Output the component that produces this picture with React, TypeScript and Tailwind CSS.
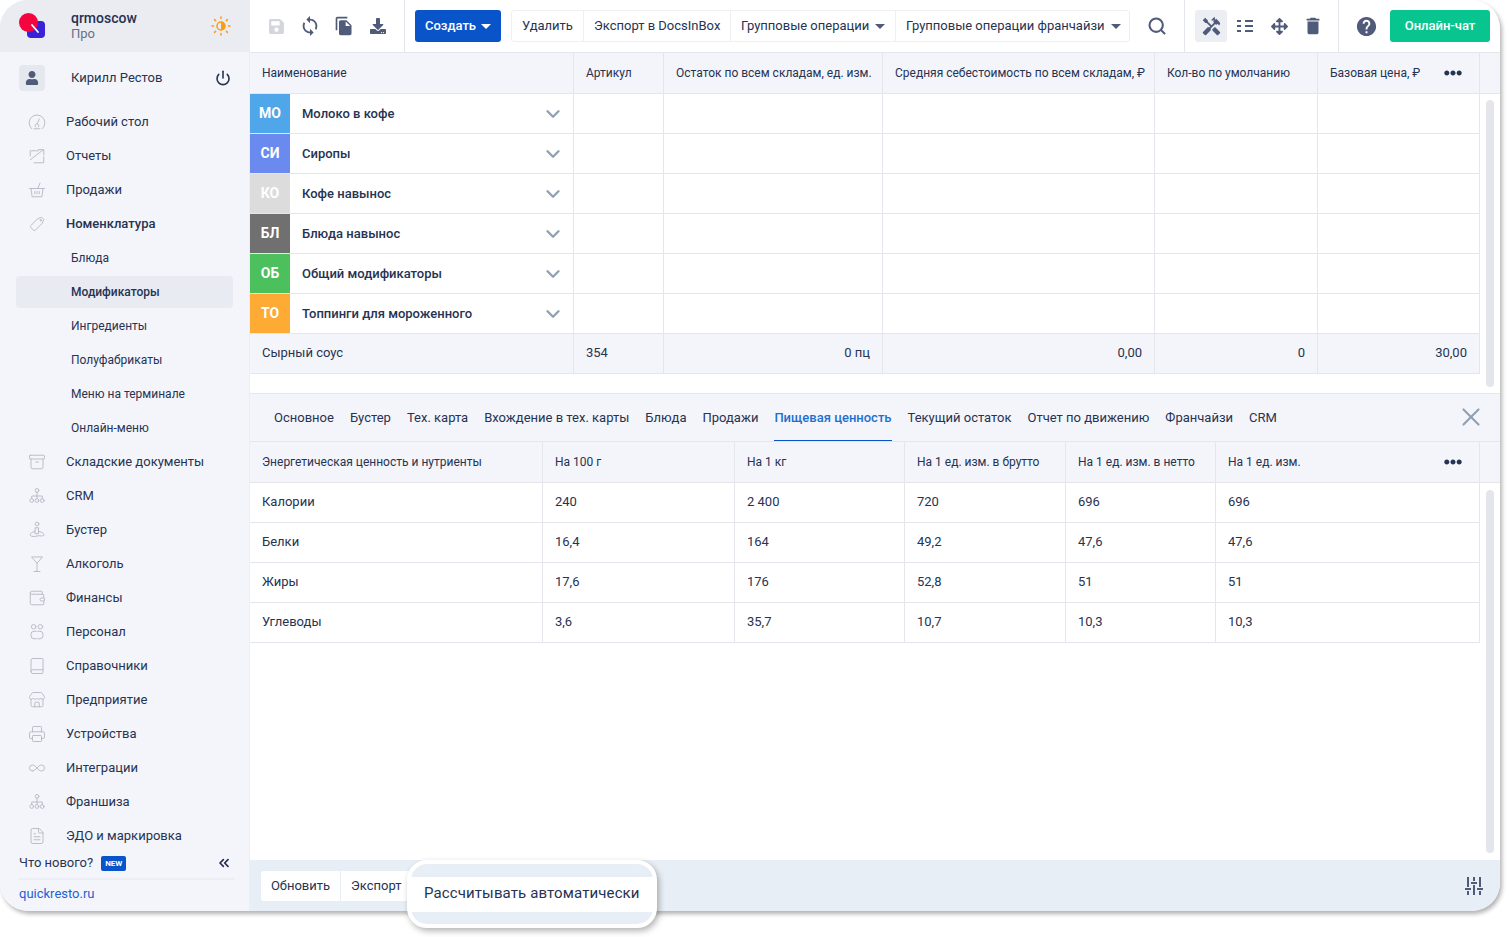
import type { ComponentType, ReactNode } from "react";
import {
  Archive,
  Book,
  ChevronDown,
  ChevronsLeft,
  FileText,
  Infinity as InfinityIcon,
  Martini,
  Power,
  Printer,
  Search,
  Store,
  Wallet,
  X,
} from "lucide-react";
import { FaArrowsAlt, FaDownload, FaEllipsisH, FaSave, FaUser } from "react-icons/fa";
import { MdDelete, MdFileCopy, MdHandyman, MdHelp, MdSync } from "react-icons/md";

type IconProps = { className?: string; strokeWidth?: number };
type NavIcon = ComponentType<IconProps>;

function line(children: ReactNode) {
  return function LineIcon({ className, strokeWidth }: IconProps) {
    return (
      <svg className={className} viewBox="0 0 24 24" fill="none" stroke="currentColor" strokeWidth={strokeWidth} strokeLinecap="round" strokeLinejoin="round">
        {children}
      </svg>
    );
  };
}

const DashIcon = line(
  <>
    <path d="M5 21a10.5 10.5 0 1 1 14 0" />
    <path d="M10 18.5a2.5 2.5 0 1 1 4 0" />
    <path d="M12.5 14l2.5-6" />
    <path d="M8 21h8" />
  </>,
);
const ReportIcon = line(
  <>
    <path d="M14 5H3v7" />
    <path d="M3 17L20 4" />
    <path d="M14 3.5h7v7" />
    <path d="M21 13v8H8" />
  </>,
);
const BasketIcon = line(
  <>
    <path d="M2 10h20M4 10l1.5 11h13L20 10" />
    <path d="M13 10l3-7" />
    <path d="M9 14v3M12 14v3M15 14v3" />
  </>,
);
const TagIcon = line(
  <>
    <path d="M13 5l5-2 3 3-2 5-9 9a2 2 0 0 1-3 0l-3-3a2 2 0 0 1 0-3z" />
    <circle cx="17" cy="7" r="1" />
  </>,
);
const TreeIcon = line(
  <>
    <circle cx="12" cy="4.5" r="2.5" />
    <path d="M12 7v8M5 15.5V12h14v3.5" />
    <circle cx="5" cy="18" r="2.5" />
    <circle cx="12" cy="18" r="2.5" />
    <circle cx="19" cy="18" r="2.5" />
  </>,
);
const BoosterIcon = line(
  <>
    <circle cx="12" cy="4" r="2.5" />
    <path d="M10 9h4v8h-4z" />
    <path d="M9 14c-4 1-7 3-6 5s6 2 9 1 8 1 9-1-2-4-6-5" />
  </>,
);
const StaffIcon = line(
  <>
    <circle cx="7.5" cy="5" r="3" />
    <circle cx="16.5" cy="5" r="3" />
    <path d="M11 11H8a4 4 0 0 0-4 4v2a4 4 0 0 0 4 4h3" />
    <path d="M13 11h3a4 4 0 0 1 4 4v2a4 4 0 0 1-4 4h-3" />
  </>,
);

const navTop: { label: string; icon: NavIcon }[] = [
  { label: "Рабочий стол", icon: DashIcon },
  { label: "Отчеты", icon: ReportIcon },
  { label: "Продажи", icon: BasketIcon },
];

const subItems = ["Блюда", "Модификаторы", "Ингредиенты", "Полуфабрикаты", "Меню на терминале", "Онлайн-меню"];

const navBottom: { label: string; icon: NavIcon }[] = [
  { label: "Складские документы", icon: Archive },
  { label: "CRM", icon: TreeIcon },
  { label: "Бустер", icon: BoosterIcon },
  { label: "Алкоголь", icon: Martini },
  { label: "Финансы", icon: Wallet },
  { label: "Персонал", icon: StaffIcon },
  { label: "Справочники", icon: Book },
  { label: "Предприятие", icon: Store },
  { label: "Устройства", icon: Printer },
  { label: "Интеграции", icon: InfinityIcon },
  { label: "Франшиза", icon: TreeIcon },
  { label: "ЭДО и маркировка", icon: FileText },
];

const groups = [
  { tile: "МО", name: "Молоко в кофе", color: "bg-[#4fa6e8]" },
  { tile: "СИ", name: "Сиропы", color: "bg-[#6a8af0]" },
  { tile: "КО", name: "Кофе навынос", color: "bg-[#dcdcdc]" },
  { tile: "БЛ", name: "Блюда навынос", color: "bg-[#707070]" },
  { tile: "ОБ", name: "Общий модификаторы", color: "bg-[#4cc05c]" },
  { tile: "ТО", name: "Топпинги для мороженного", color: "bg-[#fdab34]" },
];

const tabs = [
  "Основное",
  "Бустер",
  "Тех. карта",
  "Вхождение в тех. карты",
  "Блюда",
  "Продажи",
  "Пищевая ценность",
  "Текущий остаток",
  "Отчет по движению",
  "Франчайзи",
  "CRM",
];

const nutrition = [
  ["Калории", "240", "2 400", "720", "696", "696"],
  ["Белки", "16,4", "164", "49,2", "47,6", "47,6"],
  ["Жиры", "17,6", "176", "52,8", "51", "51"],
  ["Углеводы", "3,6", "35,7", "10,7", "10,3", "10,3"],
];

const topCols = "grid grid-cols-[324px_90px_219px_272px_163px_162px]";
const bottomCols = "grid grid-cols-[293px_192px_170px_161px_150px_264px]";

function NavRow({ label, icon: Icon, bold }: { label: string; icon: NavIcon; bold?: boolean }) {
  return (
    <div className="flex h-[34px] shrink-0 items-center">
      <div className="flex w-[66px] justify-center pl-[8px]">
        <Icon className="h-[18px] w-[18px] text-[#b4b8c2]" strokeWidth={1.2} />
      </div>
      <span className={bold ? "font-medium" : ""}>{label}</span>
    </div>
  );
}

function Sidebar() {
  return (
    <aside className="flex w-[250px] shrink-0 flex-col border-r border-[#eceef3] bg-[#f4f5fa] text-[13px] text-[#263352]">
      <div className="flex h-[52px] shrink-0 items-center bg-[#ebecf1] pl-[19px] pr-[18px]">
        <svg className="h-[28px] w-[28px]" viewBox="0 0 28 28">
          <rect x="8" y="9" width="18" height="17" rx="4" fill="#3a22d6" />
          <circle cx="9.5" cy="10.5" r="9.5" fill="#f5053f" />
          <path d="M13 13l6 7" stroke="#fff" strokeWidth="1.8" strokeLinecap="round" />
        </svg>
        <div className="ml-[24px] flex flex-1 flex-col leading-[15px]">
          <span className="text-[14px] font-medium">qrmoscow</span>
          <span className="text-[#667089]">Про</span>
        </div>
        <svg className="h-[20px] w-[20px]" viewBox="0 0 20 20" stroke="#fb9a14" strokeWidth="1.5" strokeLinecap="round">
          <circle cx="10" cy="10" r="4" fill="none" />
          <path d="M10 6a4 4 0 0 1 0 8z" fill="#fb9a14" stroke="none" />
          <path d="M10 1v1.5M10 17.5V19M1 10h1.5M17.5 10H19M3.6 3.6l1.1 1.1M15.3 15.3l1.1 1.1M3.6 16.4l1.1-1.1M15.3 4.7l1.1-1.1" />
        </svg>
      </div>
      <div className="flex h-[53px] shrink-0 items-center pb-[1px] pl-[19px] pr-[18px]">
        <div className="flex h-[26px] w-[26px] items-center justify-center rounded-[4px] bg-[#e6e8ef]">
          <FaUser className="h-[14px] w-[14px] text-[#4f5b78]" />
        </div>
        <span className="ml-[26px] flex-1">Кирилл Рестов</span>
        <Power className="h-[16px] w-[16px] text-[#263352]" strokeWidth={2.4} />
      </div>
      <div className="flex min-h-0 flex-1 flex-col overflow-hidden">
        {navTop.map((n) => (
          <NavRow key={n.label} {...n} />
        ))}
        <NavRow label="Номенклатура" icon={TagIcon} bold />
        {subItems.map((s) => (
          <div key={s} className="flex h-[34px] shrink-0 items-center px-[16px] text-[12px]">
            <div
              className={
                s === "Модификаторы"
                  ? "flex h-[32px] w-[217px] items-center rounded-[4px] bg-[#e9ebf2] pl-[55px] font-medium"
                  : "flex h-[32px] w-[217px] items-center pl-[55px]"
              }
            >
              {s}
            </div>
          </div>
        ))}
        {navBottom.map((n) => (
          <NavRow key={n.label} {...n} />
        ))}
      </div>
      <div className="h-[60px] shrink-0 pl-[19px] pr-[14px] pt-[3px]">
        <div className="flex h-[26px] items-center border-b-2 border-[#eceef3] pb-[6px]">
          <span>Что нового?</span>
          <span className="ml-[8px] rounded-[2px] bg-[#0a54c9] px-[4px] py-[1px] text-[8px] font-bold leading-[13px] text-white">NEW</span>
          <ChevronsLeft className="ml-auto mr-[3px] h-[16px] w-[16px]" strokeWidth={2.6} />
        </div>
        <div className="mt-[4px] text-[#1f5fd0]">quickresto.ru</div>
      </div>
    </aside>
  );
}

function ToolIcon({ children, active }: { children: ReactNode; active?: boolean }) {
  return (
    <div className={active ? "flex h-[32px] w-[32px] items-center justify-center rounded-[3px] bg-[#eceef3]" : "flex h-[32px] w-[32px] items-center justify-center"}>
      {children}
    </div>
  );
}

function Caret() {
  return <span className="ml-[6px] inline-block h-0 w-0 border-x-[5px] border-t-[5px] border-x-transparent border-t-[#4f5b78]" />;
}

function Toolbar() {
  const btn = "flex h-full shrink-0 items-center whitespace-nowrap border-r border-[#eeeff3] px-[10px] last:border-r-0";
  return (
    <div className="flex h-[53px] shrink-0 items-center border-b border-[#e4e6ec] text-[13px] text-[#263352]">
      <div className="flex h-full w-[155px] shrink-0 items-center gap-[2px] border-r border-[#e4e6ec] pl-[10px]">
        <ToolIcon><FaSave className="h-[17px] w-[17px] text-[#d3d6dc]" /></ToolIcon>
        <ToolIcon><MdSync className="h-[22px] w-[22px] text-[#4f5b78]" /></ToolIcon>
        <ToolIcon><MdFileCopy className="h-[20px] w-[20px] text-[#4f5b78]" /></ToolIcon>
        <ToolIcon><FaDownload className="h-[16px] w-[16px] text-[#4f5b78]" /></ToolIcon>
      </div>
      <div className="ml-[10px] flex h-[32px] w-[86px] items-center justify-center rounded-[3px] bg-[#0a54c9] font-medium text-white">
        Создать
        <span className="ml-[5px] inline-block h-0 w-0 border-x-[5px] border-t-[5px] border-x-transparent border-t-white" />
      </div>
      <div className="ml-[10px] flex h-[32px] w-[619px] items-center rounded-[3px] border border-[#eeeff3]">
        <div className={`${btn} w-[72px]`}>Удалить</div>
        <div className={`${btn} w-[147px]`}>Экспорт в DocsInBox</div>
        <div className={`${btn} w-[165px]`}>Групповые операции<Caret /></div>
        <div className={`${btn} flex-1`}>Групповые операции франчайзи<Caret /></div>
      </div>
      <div className="flex h-full w-[54px] items-center justify-center">
        <Search className="h-[20px] w-[20px] text-[#4f5b78]" strokeWidth={2.5} />
      </div>
      <div className="flex h-full w-[155px] items-center gap-[2px] border-x border-[#e4e6ec] pl-[10px]">
        <ToolIcon active><MdHandyman className="h-[21px] w-[21px] text-[#4f5b78]" /></ToolIcon>
        <ToolIcon>
          <svg className="h-[14px] w-[16px] text-[#4f5b78]" viewBox="0 0 16 14" fill="currentColor">
            <path d="M0 1h4v2H0zM8 1h8v2H8zM0 6h4v2H0zM8 6h8v2H8zM0 11h4v2H0zM8 11h8v2H8z" />
          </svg>
        </ToolIcon>
        <ToolIcon><FaArrowsAlt className="h-[17px] w-[17px] text-[#4f5b78]" /></ToolIcon>
        <ToolIcon><MdDelete className="h-[22px] w-[22px] text-[#4f5b78]" /></ToolIcon>
      </div>
      <div className="flex h-full w-[51px] items-center justify-center pl-[3px]">
        <MdHelp className="h-[23px] w-[23px] text-[#4f5b78]" />
      </div>
      <div className="flex h-[32px] w-[100px] items-center justify-center rounded-[3px] bg-[#08c48f] font-medium text-white">Онлайн-чат</div>
    </div>
  );
}

function HeadCell({ children, dots }: { children: ReactNode; dots?: boolean }) {
  return (
    <div className="flex items-center border-r border-[#e4e6ec] pl-[12px] text-[12px]">
      <span className="whitespace-nowrap">{children}</span>
      {dots && <FaEllipsisH className="ml-auto mr-[17px] h-[18px] w-[18px] text-[#263352]" />}
    </div>
  );
}

function Scrollbar({ className }: { className: string }) {
  return <div className={`ml-[6px] w-[8px] rounded-[4px] bg-[#e4e6ec] ${className}`} />;
}

function TopTable() {
  return (
    <div className="flex h-[340px] shrink-0 flex-col text-[13px] text-[#263352]">
      <div className={`${topCols} h-[41px] shrink-0 border-b border-[#e4e6ec] bg-[#f4f5fa]`}>
        <HeadCell>Наименование</HeadCell>
        <HeadCell>Артикул</HeadCell>
        <HeadCell>Остаток по всем складам, ед. изм.</HeadCell>
        <HeadCell>Средняя себестоимость по всем складам, ₽</HeadCell>
        <HeadCell>Кол-во по умолчанию</HeadCell>
        <HeadCell dots>Базовая цена, ₽</HeadCell>
      </div>
      <div className="flex min-h-0 flex-1">
        <div className="w-[1230px] shrink-0">
          {groups.map((g) => (
            <div key={g.name} className={`${topCols} h-[40px] border-b border-[#e4e6ec]`}>
              <div className="flex items-center border-r border-[#e4e6ec]">
                <div className={`flex h-full w-[40px] items-center justify-center text-[14px] font-bold text-white ${g.color}`}>{g.tile}</div>
                <span className="ml-[12px] flex-1 font-medium">{g.name}</span>
                <ChevronDown className="mr-[9px] h-[22px] w-[22px] text-[#8fa1b3]" strokeWidth={2.6} />
              </div>
              <div className="border-r border-[#e4e6ec]" />
              <div className="border-r border-[#e4e6ec]" />
              <div className="border-r border-[#e4e6ec]" />
              <div className="border-r border-[#e4e6ec]" />
              <div className="border-r border-[#e4e6ec]" />
            </div>
          ))}
          <div className={`${topCols} h-[40px] border-b border-[#e4e6ec] bg-[#f4f5fa]`}>
            <div className="flex items-center border-r border-[#e4e6ec] pb-[1px] pl-[12px]">Сырный соус</div>
            <div className="flex items-center border-r border-[#e4e6ec] pb-[1px] pl-[12px]">354</div>
            <div className="flex items-center justify-end border-r border-[#e4e6ec] pb-[1px] pr-[12px]">0 пц</div>
            <div className="flex items-center justify-end border-r border-[#e4e6ec] pb-[1px] pr-[12px]">0,00</div>
            <div className="flex items-center justify-end border-r border-[#e4e6ec] pb-[1px] pr-[12px]">0</div>
            <div className="flex items-center justify-end border-r border-[#e4e6ec] pb-[1px] pr-[12px]">30,00</div>
          </div>
        </div>
        <Scrollbar className="my-[6px]" />
      </div>
    </div>
  );
}

function Tabs() {
  return (
    <div className="flex h-[49px] shrink-0 items-stretch gap-[16px] border-y border-[#e4e6ec] bg-[#f4f5fa] pl-[24px] text-[13px] text-[#263352]">
      {tabs.map((t) => (
        <div
          key={t}
          className={
            t === "Пищевая ценность"
              ? "flex items-center whitespace-nowrap border-y border-t-transparent border-b-[#0a54c9] font-medium text-[#1f6fd0]"
              : "flex items-center whitespace-nowrap"
          }
        >
          {t}
        </div>
      ))}
      <div className="ml-auto mr-[14px] flex items-center pb-[1px]">
        <X className="h-[30px] w-[30px] text-[#8fa1b3]" strokeWidth={1.7} />
      </div>
    </div>
  );
}

function BottomTable() {
  return (
    <div className="flex min-h-0 flex-1 flex-col text-[13px] text-[#263352]">
      <div className={`${bottomCols} h-[41px] shrink-0 border-b border-[#e4e6ec] bg-[#f4f5fa]`}>
        <HeadCell>Энергетическая ценность и нутриенты</HeadCell>
        <HeadCell>На 100 г</HeadCell>
        <HeadCell>На 1 кг</HeadCell>
        <HeadCell>На 1 ед. изм. в брутто</HeadCell>
        <HeadCell>На 1 ед. изм. в нетто</HeadCell>
        <HeadCell dots>На 1 ед. изм.</HeadCell>
      </div>
      <div className="flex min-h-0 flex-1">
        <div className="w-[1230px] shrink-0">
          {nutrition.map((row) => (
            <div key={row[0]} className={`${bottomCols} h-[40px] border-b border-[#e4e6ec]`}>
              {row.map((c, i) => (
                <div key={i} className="flex items-center border-r border-[#e4e6ec] pb-[1px] pl-[12px]">{c}</div>
              ))}
            </div>
          ))}
        </div>
        <Scrollbar className="my-[7px]" />
      </div>
    </div>
  );
}

function Footer() {
  return (
    <div className="flex h-[51px] shrink-0 items-center bg-[#e8eef5] pl-[11px] text-[13px] text-[#263352]">
      <div className="flex h-[30px] w-[160px] items-center rounded-[3px] bg-white">
        <div className="flex h-full w-[80px] items-center justify-center border-r border-[#e8eef5]">Обновить</div>
        <div className="flex h-full flex-1 items-center pl-[10px]">Экспорт</div>
      </div>
      <svg className="ml-auto mr-[17px] h-[18px] w-[18px]" viewBox="0 0 18 18" fill="#4f5b78">
        <path d="M2 0h2v10H2zM2 14h2v4H2zM0 11h6v2H0zM8 0h2v4H8zM8 8h2v10H8zM6 5h6v2H6zM14 0h2v10h-2zM14 14h2v4h-2zM12 11h6v2h-6z" />
      </svg>
    </div>
  );
}

export default function App() {
  return (
    <div className="h-[937px] w-[1509px] overflow-hidden bg-white font-['Roboto',sans-serif]">
      <div className="relative h-[911px] w-[1500px]">
        <div className="flex h-full w-full overflow-hidden rounded-[28px] bg-white shadow-[2px_3px_4px_rgba(0,0,0,0.3)]">
          <Sidebar />
          <main className="flex min-w-0 flex-1 flex-col">
            <Toolbar />
            <TopTable />
            <Tabs />
            <BottomTable />
            <Footer />
          </main>
        </div>
        <div className="absolute left-[407px] top-[860px] flex h-[68px] w-[250px] flex-col justify-center rounded-[20px] border-[4px] border-white bg-[#e8eef5] shadow-[2px_3px_6px_rgba(0,0,0,0.3)]">
          <div className="flex h-[35px] items-center bg-white pb-[2px] pl-[13px] text-[15px] tracking-[0.12px] text-[#263352]">Рассчитывать автоматически</div>
        </div>
      </div>
    </div>
  );
}
